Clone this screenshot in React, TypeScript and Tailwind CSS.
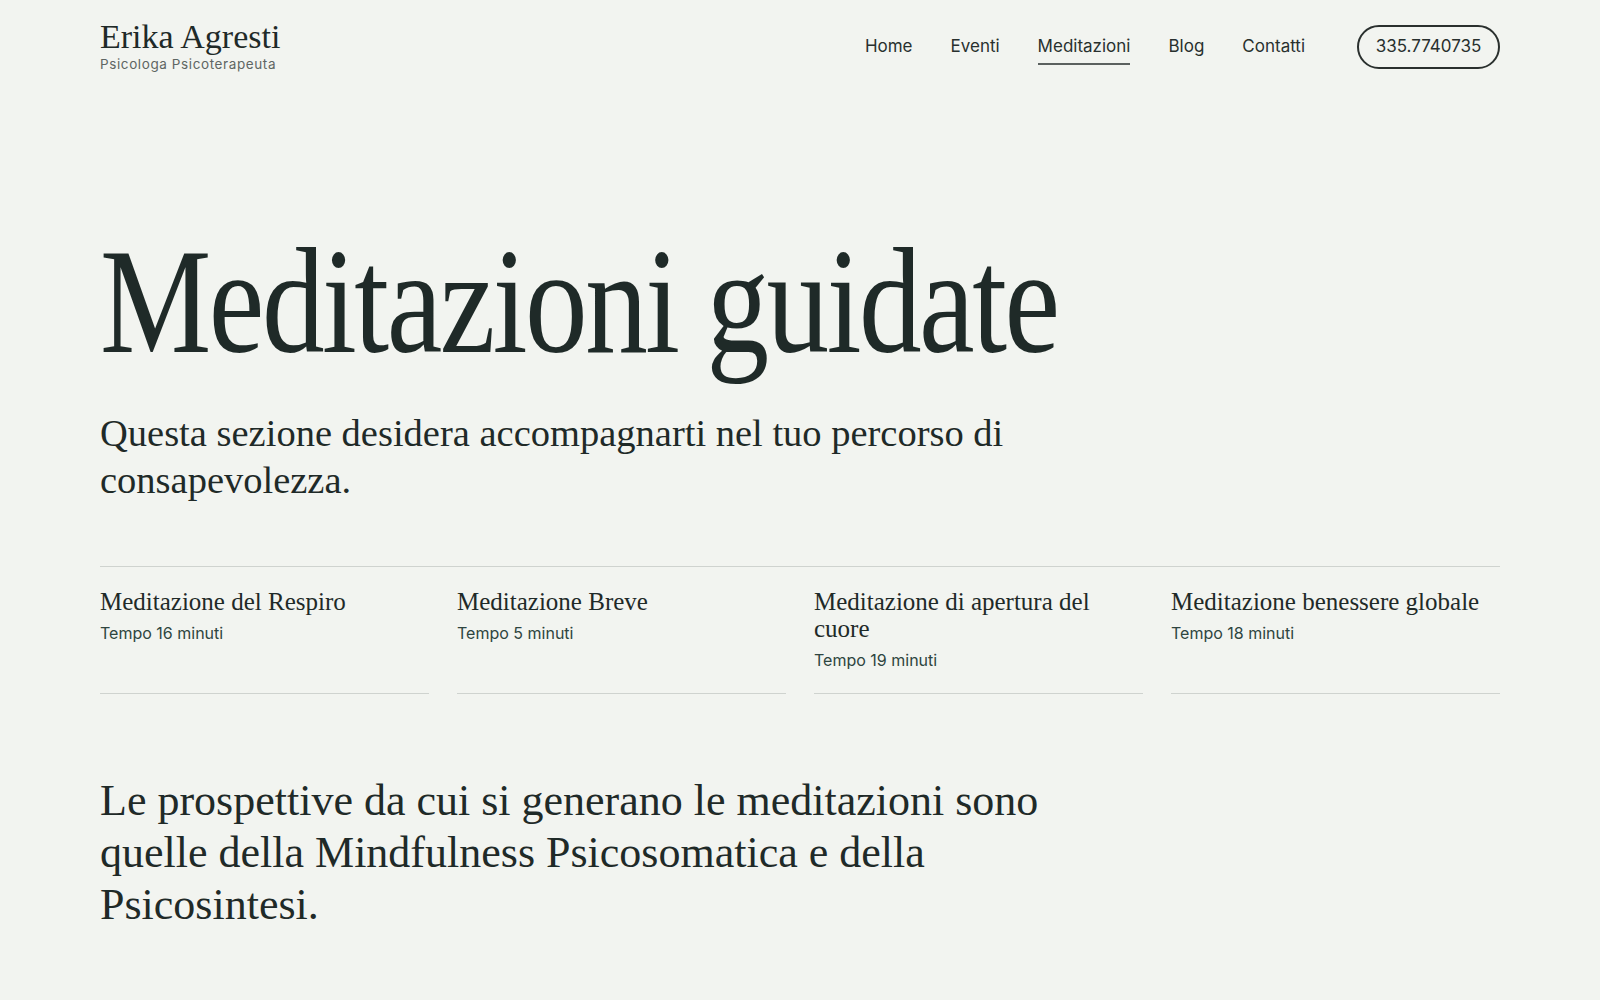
import React from "react";

const items = [
  { title: "Meditazione del Respiro", time: "Tempo 16 minuti" },
  { title: "Meditazione Breve", time: "Tempo 5 minuti" },
  { title: "Meditazione di apertura del cuore", time: "Tempo 19 minuti" },
  { title: "Meditazione benessere globale", time: "Tempo 18 minuti" },
];

export default function App() {
  return (
    <div className="min-h-screen w-full bg-[#f2f4f0] text-[#1f2a28] font-['Inter',sans-serif]">
      <div className="mx-auto w-[1400px]">
        <header className="flex items-start justify-between pt-[20px]">
          <div className="flex flex-col">
            <span className="font-['Liberation_Serif',serif] text-[34px] leading-[34px]">
              Erika Agresti
            </span>
            <span className="text-[13.5px] leading-[18px] tracking-[0.6px] text-[#5f6663] mt-[1px]">
              Psicologa Psicoterapeuta
            </span>
          </div>
          <nav className="flex items-center pt-[5px]">
            <ul className="flex items-center gap-[38px] text-[17px] text-[#28302e]">
              <li>Home</li>
              <li>Eventi</li>
              <li className="relative">
                Meditazioni
                <span className="absolute left-0 right-0 -bottom-[5px] h-[2px] bg-[#5b615f]"></span>
              </li>
              <li>Blog</li>
              <li>Contatti</li>
            </ul>
            <a className="ml-[52px] flex h-[44px] w-[143px] items-center justify-center rounded-full border-2 border-[#2a302e] text-[17px] text-[#28302e]">
              335.7740735
            </a>
          </nav>
        </header>

        <section className="pt-[153px]">
          <h1 className="origin-left scale-x-[0.835] whitespace-nowrap font-['Liberation_Serif',serif] text-[150px] leading-[150px] tracking-[-3px]">
            Meditazioni guidate
          </h1>
          <p className="mt-[34px] max-w-[960px] font-['Liberation_Serif',serif] text-[38.5px] leading-[47px]">
            Questa sezione desidera accompagnarti nel tuo percorso di consapevolezza.
          </p>
        </section>

        <section className="mt-[62px] border-t border-[#cfd3cf]">
          <div className="grid grid-cols-4 gap-[28px]">
            {items.map((it) => (
              <div key={it.title} className="border-b border-[#cfd3cf] pt-[21px] h-[127px]">
                <div className="font-['Liberation_Serif',serif] text-[25px] leading-[27px]">{it.title}</div>
                <div className="mt-[8px] text-[16px] leading-[20px] text-[#2e4540]">{it.time}</div>
              </div>
            ))}
          </div>
        </section>

        <section className="mt-[81px] pb-[80px]">
          <p className="max-w-[960px] font-['Liberation_Serif',serif] text-[44px] leading-[52px]">
            Le prospettive da cui si generano le meditazioni sono quelle della Mindfulness Psicosomatica e della Psicosintesi.
          </p>
        </section>
      </div>
    </div>
  );
}
